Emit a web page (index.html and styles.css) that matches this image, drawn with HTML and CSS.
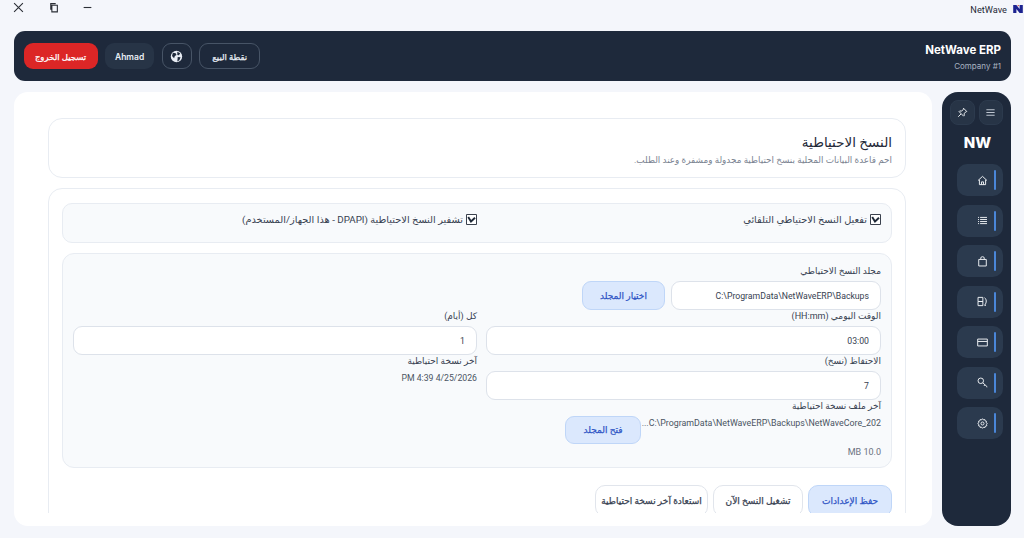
FILE: index.html
```html
<!DOCTYPE html>
<html lang="ar" dir="rtl">
<head>
<meta charset="utf-8">
<title>NetWave ERP</title>
<link rel="stylesheet" href="styles.css">
</head>
<body>
<div class="app">
  <div class="titlebar">
    <div class="brand">
      <svg class="logo" viewBox="0 0 12 10"><path d="M0 0h4l4 5V0h4v10H8L4 5v5H0z" fill="#1c2390"/><path d="M5 0h2v2z" fill="#c33"/></svg>
      <span>NetWave</span>
    </div>
    <div class="winctl">
      <svg class="winicon" viewBox="0 0 10 10"><path d="M1.500 5h7" /></svg>
      <svg class="winicon" viewBox="0 0 10 10"><path d="M3.500 3h5v6h-5zM2.500 7V1.500h4.500" /></svg>
      <svg class="winicon" viewBox="0 0 10 10"><path d="M1 1l8 8M9 1l-8 8" /></svg>
    </div>
  </div>

  <header class="topbar">
    <div class="company">
      <div class="company-name" dir="ltr">NetWave ERP</div>
      <div class="company-sub" dir="ltr">Company #1</div>
    </div>
    <div class="top-actions">
      <button class="tbtn outline">نقطة البيع</button>
      <button class="tbtn outline globe">
        <svg viewBox="0 0 16 16" class="globe-icon"><circle cx="8" cy="8" r="7" fill="#e8edf4"/><path d="M3.500 3.500l3.500.5 1 2-2 1.500-1 2.500-2.500-2.500zM9 2l3.500 2-1.500 2.500-2-.5zM9.500 8.500l3.500.5-1.500 3.500-2.500 1.500z" fill="#1e293b"/></svg>
      </button>
      <button class="tbtn user">Ahmad</button>
      <button class="tbtn logout">تسجيل الخروج</button>
    </div>
  </header>

  <div class="body-row">
    <aside class="sidebar">
      <div class="side-tools">
        <button class="side-tool">
          <svg viewBox="0 0 16 16" class="ico menu-ico"><path d="M2 4h12M2 8h12M2 12h12"/></svg>
        </button>
        <button class="side-tool">
          <svg viewBox="0 0 16 16" class="ico"><path d="M9.500 1.800l4.700 4.700-1.200.6-2.700 2.400.3 2.800-1 1L3 6.700l1-1 2.800.3 2.400-2.700zM5.800 10.200L1.800 14.200"/></svg>
        </button>
      </div>
      <div class="side-logo" dir="ltr">NW</div>
      <nav class="side-nav">
        <a class="nav-item"><svg viewBox="0 0 16 16" class="ico"><path d="M1.500 8L8 2l6.500 6M3.500 7v7h9V7M6.500 14v-4h3v4"/></svg></a>
        <a class="nav-item"><svg viewBox="0 0 16 16" class="ico"><path d="M1.500 3.500h1.500M4.500 3.500h10M1.500 6.500h1.500M4.500 6.500h10M1.500 9.500h1.500M4.500 9.500h10M1.500 12.500h1.500M4.500 12.500h10"/></svg></a>
        <a class="nav-item"><svg viewBox="0 0 16 16" class="ico"><path d="M2.500 5h11v9.500h-11zM5.500 5V3a2.500 2 0 0 1 5 0v2"/></svg></a>
        <a class="nav-item"><svg viewBox="0 0 16 16" class="ico"><path d="M1.500 2h7v6h-7zM1.500 8h7v6h-7zM11 2.500c3 2 3.500 7 0 11l2 .2"/></svg></a>
        <a class="nav-item"><svg viewBox="0 0 16 16" class="ico"><path d="M1 3h14v10H1zM1 6.500h14"/></svg></a>
        <a class="nav-item"><svg viewBox="0 0 16 16" class="ico"><circle cx="5.500" cy="5.500" r="4"/><path d="M8.500 8.500L14.500 14v1M11.500 11.500l-1.500 1.500"/></svg></a>
        <a class="nav-item"><svg viewBox="0 0 16 16" class="ico"><circle cx="8" cy="8" r="2.200"/><path d="M8 1l1.300 1.700 2-.5.500 2 2 .6-.5 2L15 8l-1.200 1.300.5 2-2 .5-.6 2-2-.5L8 15l-1.300-1.700-2 .5-.5-2-2-.5.5-2L1 8l1.700-1.300-.5-2 2-.5.5-2 2 .5z"/></svg></a>
      </nav>
    </aside>

    <main class="panel">
      <div class="scroller">
        <section class="card page-head">
          <h1>النسخ الاحتياطية</h1>
          <p>احم قاعدة البيانات المحلية بنسخ احتياطية مجدولة ومشفرة وعند الطلب.</p>
        </section>

        <section class="card settings">
          <div class="toggles">
            <label class="toggle"><svg viewBox="0 0 11 11" class="check"><path d="M.5.5h10v10H.5z" fill="#fff"/><path class="tick" d="M2.200 3L5 7.500 9 3.800"/></svg>تفعيل النسخ الاحتياطي التلقائي</label>
            <label class="toggle"><svg viewBox="0 0 11 11" class="check"><path d="M.5.5h10v10H.5z" fill="#fff"/><path class="tick" d="M2.200 3L5 7.500 9 3.800"/></svg>تشفير النسخ الاحتياطية (DPAPI - هذا الجهاز/المستخدم)</label>
          </div>

          <div class="form-box">
            <div class="field wide">
              <label class="flabel">مجلد النسخ الاحتياطي</label>
              <div class="input-row">
                <input class="input path" value="C:\ProgramData\NetWaveERP\Backups">
                <button class="btn primary pick">اختيار المجلد</button>
              </div>
            </div>
            <div class="field">
              <label class="flabel">الوقت اليومي (HH:mm)</label>
              <input class="input" value="03:00">
            </div>
            <div class="field">
              <label class="flabel">كل (أيام)</label>
              <input class="input" value="1">
            </div>
            <div class="field">
              <label class="flabel">الاحتفاظ (نسخ)</label>
              <input class="input" value="7">
            </div>
            <div class="field">
              <label class="flabel">آخر نسخة احتياطية</label>
              <div class="plain">4/25/2026 4:39 PM</div>
            </div>
            <div class="field wide">
              <label class="flabel">آخر ملف نسخة احتياطية</label>
              <div class="file-row">
                <div class="plain filepath">C:\ProgramData\NetWaveERP\Backups\NetWaveCore_202...</div>
                <button class="btn primary open">فتح المجلد</button>
              </div>
              <div class="size">10.0 MB</div>
            </div>
          </div>

          <div class="actions">
            <button class="btn primary act">حفظ الإعدادات</button>
            <button class="btn ghost act">تشغيل النسخ الآن</button>
            <button class="btn ghost act">استعادة آخر نسخة احتياطية</button>
          </div>
        </section>
      </div>
    </main>
  </div>
</div>
</body>
</html>
```

FILE: styles.css
```css
* { box-sizing: border-box; }
html, body { margin: 0; padding: 0; height: 100%; }
body {
  background: #f4f6fb;
  font-family: "Roboto", "Noto Sans", "DejaVu Sans", sans-serif;
  color: #1f2937;
  font-size: 10px;
  overflow: hidden;
}
button, input { font-family: inherit; }
.app { width: 1024px; height: 538px; display: flex; flex-direction: column; padding-bottom: 12px; }

.titlebar { height: 31px; flex: none; display: flex; justify-content: space-between; align-items: flex-start; padding: 0 1px 0 0; }
.brand { display: flex; align-items: center; gap: 6px; height: 18px; font-size: 9.200px; color: #1f2937; }
.logo { width: 10px; height: 8px; }
.winctl { display: flex; gap: 23.500px; padding-left: 13px; padding-top: 2px; }
.winicon { width: 11px; height: 11px; fill: none; stroke: #2b2f36; stroke-width: 1; }

.topbar {
  flex: none; height: 50px; margin: 0 13px 0 13.500px; padding: 0 10px;
  background: #1e293b; border-radius: 11px;
  display: flex; justify-content: space-between; align-items: center;
}
.company { text-align: right; padding-top: 2px; }
.company-name { font-family: "Inter", sans-serif; font-size: 11.500px; font-weight: 700; color: #fff; line-height: 15px; }
.company-sub { font-family: "Inter", sans-serif; font-size: 8px; color: #a9b3c1; line-height: 11px; margin-top: 3px; }
.top-actions { display: flex; gap: 7.600px; align-items: center; }
.tbtn { height: 26px; border-radius: 9px; font-size: 8.500px; font-weight: 400; color: #e8edf4; border: 1px solid transparent; padding: 1px 0 0; display: flex; align-items: center; justify-content: center; -webkit-text-stroke: .25px currentColor; }
.outline { background: transparent; border-color: #475466; width: 61px; }
.globe { width: 30px; padding: 0; }
.globe-icon { width: 13px; height: 13px; }
.user { background: #273446; width: 49px; font-family: "Inter", sans-serif; font-weight: 600; -webkit-text-stroke: 0; }
.logout { background: #dc2626; color: #fff; width: 74px; }

.body-row { flex: 1; min-height: 0; display: flex; gap: 10px; margin: 11px 13px 0 14px; }
.sidebar { flex: none; width: 69px; background: #1e293b; border-radius: 16px; padding: 8px 8px 0 8px; display: flex; flex-direction: column; }
.side-tools { display: flex; gap: 4px; }
.side-tool { width: 24.500px; height: 25px; border-radius: 8px; background: #273446; border: 1px solid #2c3a4d; padding: 0; display: flex; align-items: center; justify-content: center; }
.ico { width: 11px; height: 11px; fill: none; stroke: #eef1f5; stroke-width: 1.400; }
.menu-ico { stroke: #c5ccd6; }
.side-logo { font-family: "Inter", sans-serif; font-size: 15px; font-weight: 800; color: #fff; text-align: center; line-height: 20px; margin-top: 8px; padding-left: 2px; }
.side-nav { display: flex; flex-direction: column; gap: 8.500px; margin-top: 11px; }
.nav-item { position: relative; width: 46px; height: 32px; border-radius: 10px; background: #2b3a4e; display: flex; align-items: center; padding-right: 15px; }
.nav-item::before { content: ""; position: absolute; right: 7px; top: 6px; width: 2px; height: 20px; border-radius: 1px; background: #4a86d8; }

.panel { flex: 1; min-width: 0; background: #fff; border-radius: 14px; padding: 26px 26px 13px 34px; display: flex; flex-direction: column; }
.scroller { flex: 1; min-height: 0; overflow: hidden; display: flex; flex-direction: column; gap: 10px; }
.card { border: 1px solid #e8ecf2; border-radius: 14px; background: #fff; flex: none; }
.page-head { height: 60px; padding: 13px 13px 0; }
.page-head h1 { margin: 0; font-size: 13.500px; font-weight: 500; line-height: 20px; color: #1f2937; }
.page-head p { margin: 1px 0 0; font-size: 8.850px; line-height: 14px; color: #7a8391; }
.settings { padding: 14px 13px 20px; }

.toggles { height: 40px; border: 1px solid #e8ecf2; border-radius: 10px; background: #f8fafc; display: grid; grid-template-columns: 404px 1fr; padding: 9px 10px 0; }
.toggle { display: flex; align-items: flex-start; gap: 3px; font-size: 9.800px; line-height: 14px; color: #374151; }
.check { width: 11px; height: 11px; flex: none; margin-top: 1px; fill: none; stroke: #3a414d; stroke-width: 1; }
.tick { stroke: #1f2937; stroke-width: 1.900; }

.form-box { margin-top: 10px; height: 215px; border: 1px solid #e8ecf2; border-radius: 12px; background: #f8fafc; padding: 11px 10px 0; display: grid; grid-template-columns: 395px 404px; column-gap: 9px; align-content: start; }
.field { display: flex; flex-direction: column; min-width: 0; }
.wide { grid-column: 1 / -1; }
.flabel { font-size: 9px; line-height: 13px; height: 16px; color: #374151; }
.input-row { display: flex; gap: 6px; }
.input { height: 29px; width: 100%; border: 1px solid #dde2ea; border-radius: 9px; background: #fff; font-size: 8.700px; color: #374151; padding: 0 11px; text-align: right; outline: none; }
.path { width: 210px; }
.btn { border-radius: 9px; font-size: 9px; font-weight: 400; padding: 0; -webkit-text-stroke: .25px currentColor; }
.primary { background: #dbe8fd; border: 1px solid #bfd6f8; color: #2f55c5; }
.ghost { background: #fff; border: 1px solid #e1e5ec; color: #374151; }
.pick { width: 83px; height: 29px; }
.plain { font-size: 8.700px; color: #4b5563; line-height: 14px; }
.file-row { display: flex; align-items: flex-start; }
.filepath { width: 240px; white-space: nowrap; font-size: 8.850px; }
.open { width: 76px; height: 28px; }
.size { font-size: 9px; color: #6b7280; line-height: 14px; margin-top: 1px; }
.actions { display: flex; gap: 5px; margin-top: 17px; }
.act { height: 32px; border-radius: 10px; }
.act:nth-child(1) { width: 84px; }
.act:nth-child(2) { width: 90px; }
.act:nth-child(3) { width: 113px; }
```
